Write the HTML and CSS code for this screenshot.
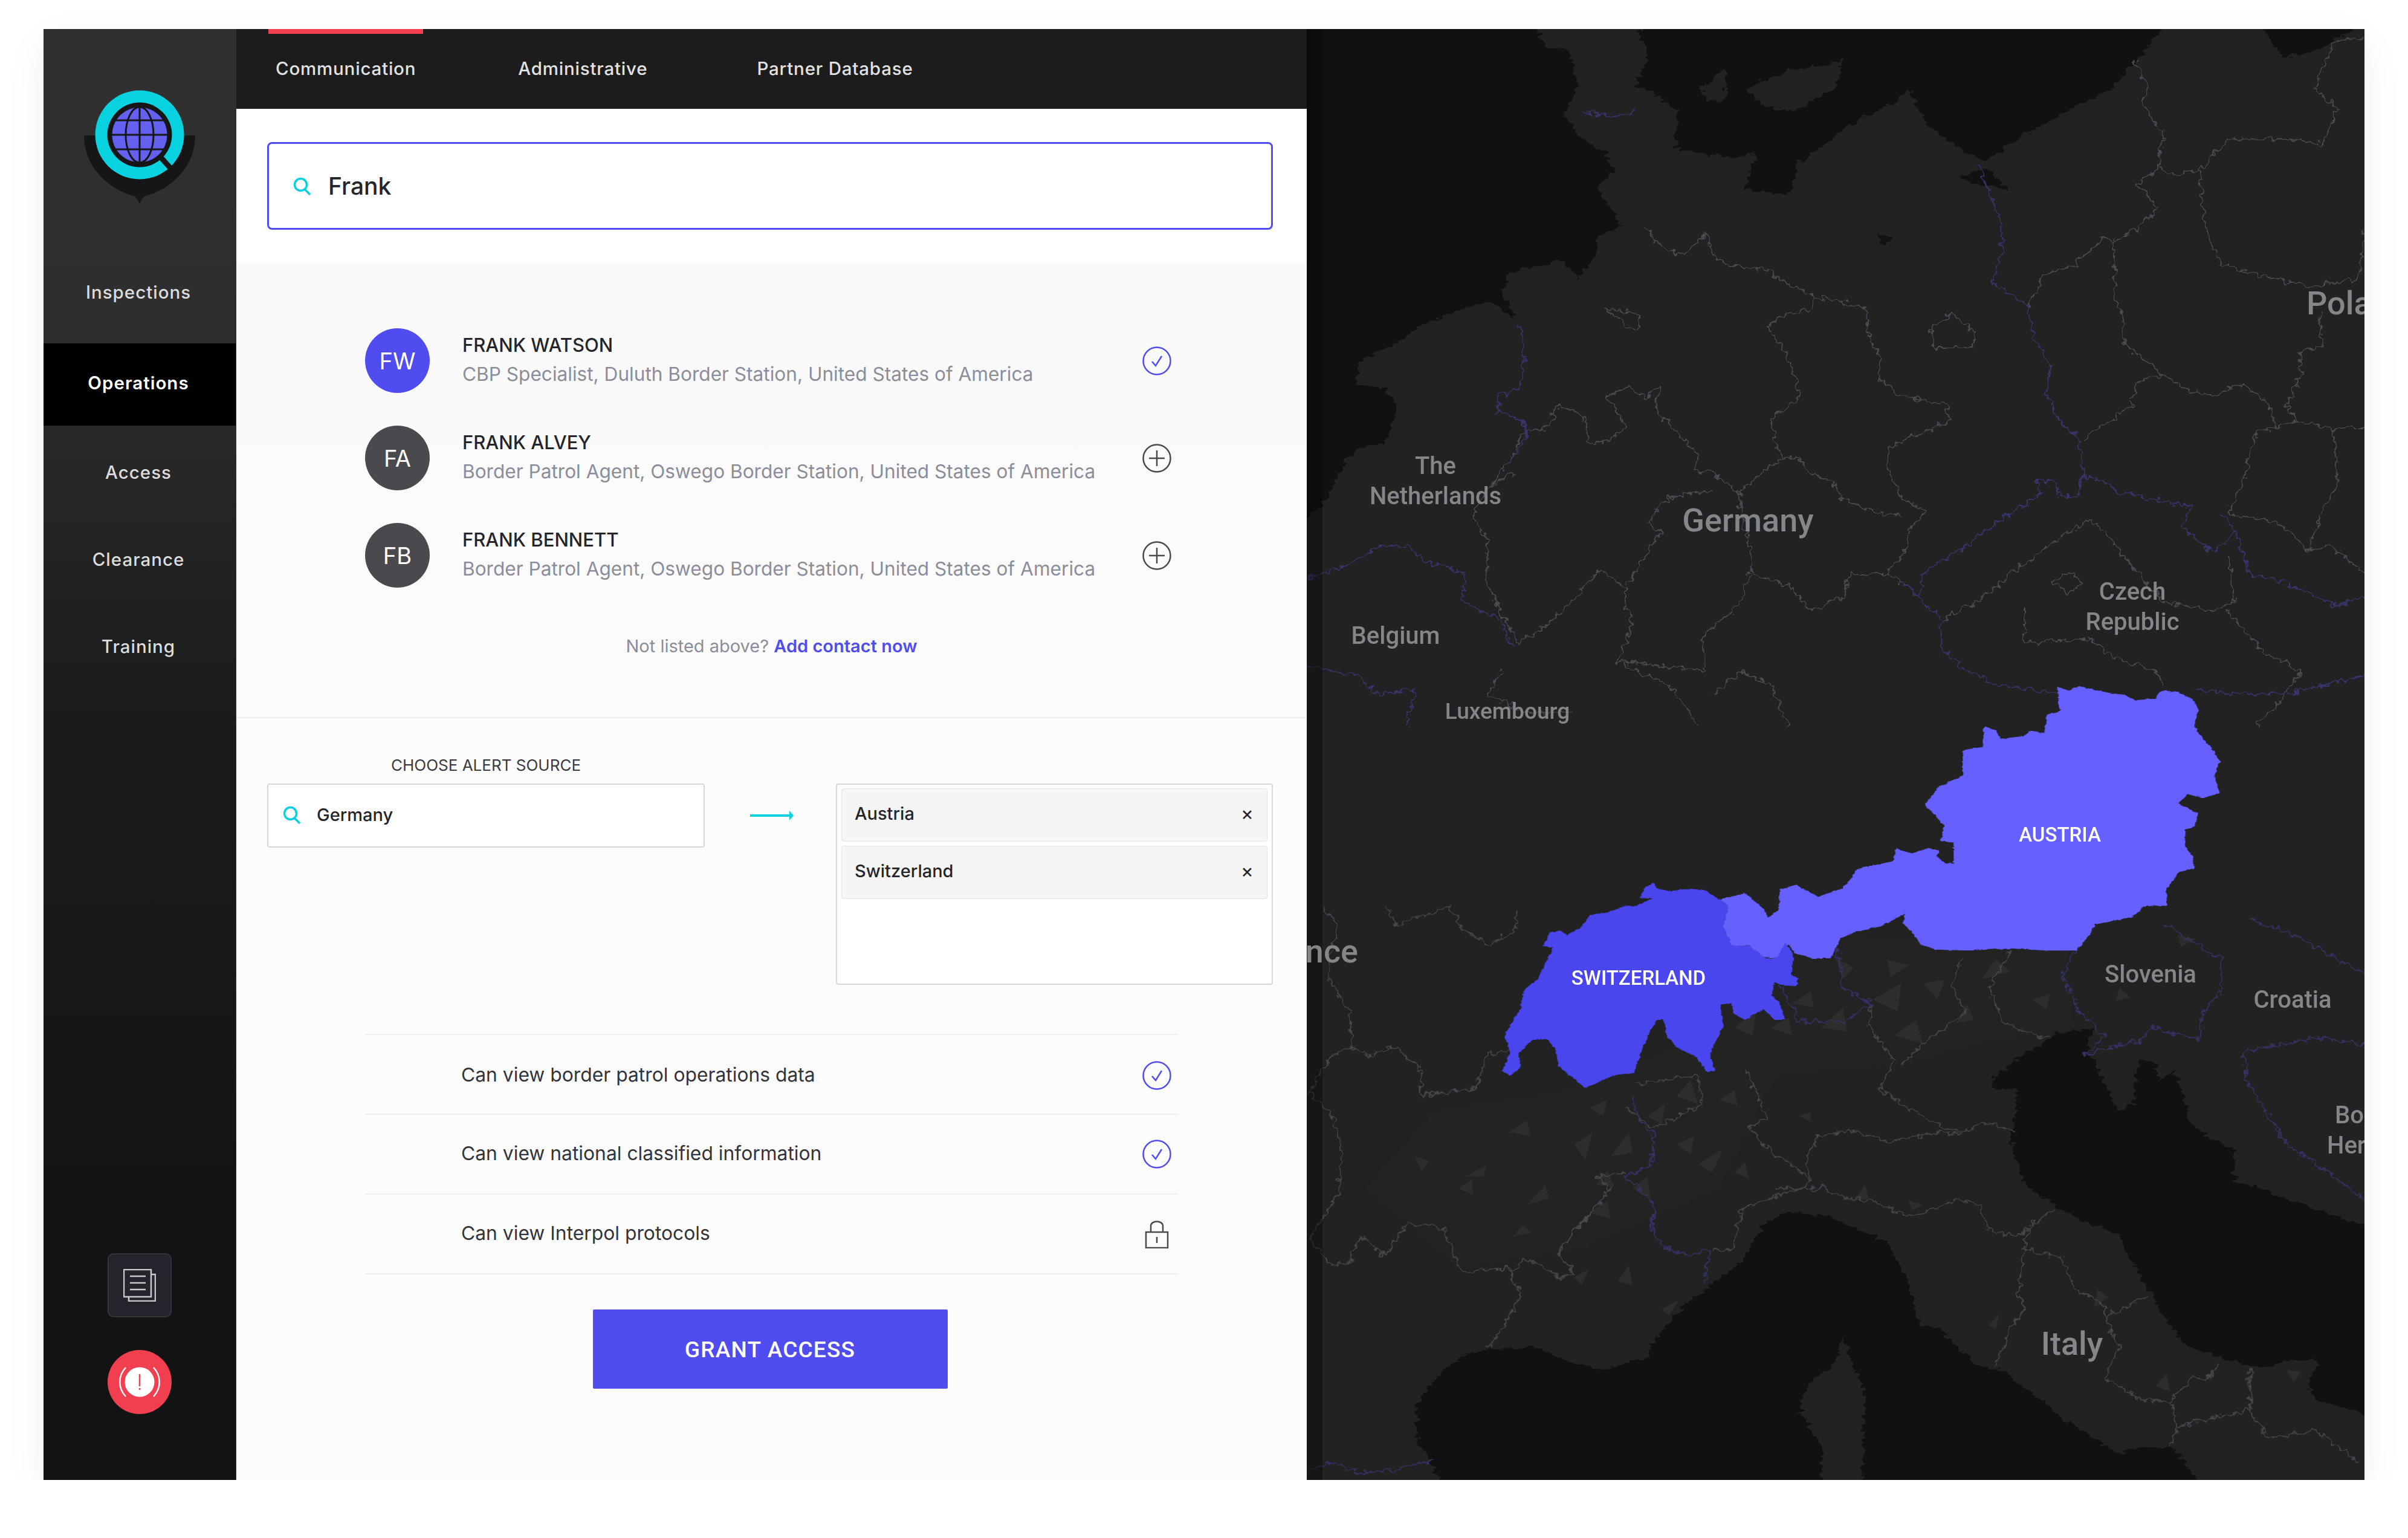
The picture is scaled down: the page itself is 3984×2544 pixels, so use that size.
FILE: index.html
```html
<!DOCTYPE html>
<html lang="en">
<head>
    <meta charset="UTF-8">
    <title>Operations - Communication</title>
    <link rel="stylesheet" href="styles.css">
</head>
<body>
    <svg class="defs" width="0" height="0">
        <defs>
            <symbol id="i-check" viewBox="0 0 48 48">
                <circle cx="24" cy="24" r="22.5" fill="none" stroke="#4f4cf0" stroke-width="2.5"/>
                <path d="M16 25l6 7 10-16" fill="none" stroke="#4f4cf0" stroke-width="2.5"/>
            </symbol>
            <symbol id="i-plus" viewBox="0 0 48 48">
                <circle cx="24" cy="24" r="22.5" fill="none" stroke="#4a4a4e" stroke-width="2.5"/>
                <path d="M24 11v26M11 24h26" fill="none" stroke="#4a4a4e" stroke-width="2.5"/>
            </symbol>
            <symbol id="i-search" viewBox="0 0 30 30">
                <circle cx="12.5" cy="12.5" r="10" fill="none" stroke="#09d2e0" stroke-width="3.5"/>
                <path d="M19 20l9 9" fill="none" stroke="#09d2e0" stroke-width="3.5"/>
            </symbol>
        </defs>
    </svg>

    <div class="frame">
        <aside class="sidebar">
            <svg class="logo" viewBox="0 0 184 190" width="184" height="190">
                <path d="M0 75H184C184 130 140 165 102 175C97 177 94 183 92 188C90 183 87 177 82 175C44 165 0 130 0 75Z" fill="#161616"/>
                <circle cx="92" cy="74" r="73.5" fill="#09d2e0"/>
                <circle cx="92" cy="74" r="53.5" fill="#161616"/>
                <circle cx="92" cy="74" r="45.5" fill="#6461f0"/>
                <g fill="none" stroke="#161616" stroke-width="3">
                    <ellipse cx="92" cy="74" rx="23" ry="46"/>
                    <path d="M92 28v92M46 74h92M52 50h80M52 98h80"/>
                </g>
                <path d="M124 108l27 30" stroke="#161616" stroke-width="9" fill="none"/>
            </svg>

            <nav class="side-nav">
                <a class="side-item">Inspections</a>
                <a class="side-item active">Operations</a>
                <a class="side-item">Access</a>
                <a class="side-item">Clearance</a>
                <a class="side-item">Training</a>
            </nav>

            <div class="side-tools">
                <button class="doc-btn">
                    <svg viewBox="0 0 54 54" width="54" height="54" fill="none" stroke="#c9c9cc" stroke-width="2.5">
                        <rect x="1" y="1" width="45" height="45"/>
                        <path d="M46 9h7v44H9v-7M11 12h26M11 23h26M11 34h26"/>
                    </svg>
                </button>
                <button class="alert-btn">
                    <svg viewBox="0 0 70 52" width="70" height="52">
                        <circle cx="35" cy="26" r="24.5" fill="#fff"/>
                        <path d="M35 13v20M35 36v3" stroke="#f23f4f" stroke-width="2.5" fill="none"/>
                        <path d="M12 2C-1 16-1 36 12 50M58 2C71 16 71 36 58 50" stroke="#fff" stroke-width="2.5" fill="none"/>
                    </svg>
                </button>
            </div>
        </aside>

        <main class="main">
            <div class="tabs">
                <a class="tab active">Communication</a>
                <a class="tab">Administrative</a>
                <a class="tab">Partner Database</a>
            </div>

            <div class="search-wrap">
                <div class="search-box">
                    <svg class="search-icon"><use href="#i-search"/></svg>
                    <span>Frank</span>
                </div>
            </div>

            <section class="contacts">
                <div class="contact">
                    <div class="avatar blue">FW</div>
                    <div class="contact-info">
                        <div class="contact-name">FRANK WATSON</div>
                        <div class="contact-role">CBP Specialist, Duluth Border Station, United States of America</div>
                    </div>
                    <svg class="row-icon"><use href="#i-check"/></svg>
                </div>
                <div class="contact">
                    <div class="avatar">FA</div>
                    <div class="contact-info">
                        <div class="contact-name">FRANK ALVEY</div>
                        <div class="contact-role">Border Patrol Agent, Oswego Border Station, United States of America</div>
                    </div>
                    <svg class="row-icon"><use href="#i-plus"/></svg>
                </div>
                <div class="contact">
                    <div class="avatar">FB</div>
                    <div class="contact-info">
                        <div class="contact-name">FRANK BENNETT</div>
                        <div class="contact-role">Border Patrol Agent, Oswego Border Station, United States of America</div>
                    </div>
                    <svg class="row-icon"><use href="#i-plus"/></svg>
                </div>
                <p class="not-listed">Not listed above? <a>Add contact now</a></p>
            </section>

            <section class="alerts">
                <div class="source-row">
                    <div class="source-col">
                        <div class="source-label">CHOOSE ALERT SOURCE</div>
                        <div class="source-input">
                            <svg class="source-icon"><use href="#i-search"/></svg>
                            <span>Germany</span>
                        </div>
                    </div>
                    <svg class="arrow" viewBox="0 0 72 16" width="72" height="16">
                        <path d="M0 8h68" stroke="#09d2e0" stroke-width="4"/>
                        <path d="M65 0l7 8-7 8z" fill="#09d2e0"/>
                    </svg>
                    <div class="chip-box">
                        <div class="chip">Austria<span class="chip-x">×</span></div>
                        <div class="chip">Switzerland<span class="chip-x">×</span></div>
                    </div>
                </div>

                <ul class="perms">
                    <li class="perm">
                        <span>Can view border patrol operations data</span>
                        <svg class="row-icon"><use href="#i-check"/></svg>
                    </li>
                    <li class="perm">
                        <span>Can view national classified information</span>
                        <svg class="row-icon"><use href="#i-check"/></svg>
                    </li>
                    <li class="perm">
                        <span>Can view Interpol protocols</span>
                        <svg class="row-icon" viewBox="0 0 48 48">
                            <path d="M14 22V11C14 1 34 1 34 11V22" fill="none" stroke="#4a4a4e" stroke-width="2.5"/>
                            <rect x="6" y="21" width="36" height="26" fill="none" stroke="#4a4a4e" stroke-width="2.5"/>
                            <path d="M24 29v10" stroke="#4a4a4e" stroke-width="2.5"/>
                        </svg>
                    </li>
                </ul>

                <button class="grant-btn">GRANT ACCESS</button>
            </section>
        </main>

        <div class="map">
            <svg viewBox="2162 48 1750 2400" preserveAspectRatio="none">
                <defs>
                    <filter id="rough" x="-5%" y="-5%" width="110%" height="110%" color-interpolation-filters="sRGB">
                        <feTurbulence type="fractalNoise" baseFrequency="0.09" numOctaves="2" seed="4"/>
                        <feDisplacementMap in="SourceGraphic" scale="18" xChannelSelector="R" yChannelSelector="G"/>
                    </filter>
                    <filter id="fine" x="-5%" y="-5%" width="110%" height="110%" color-interpolation-filters="sRGB">
                        <feTurbulence type="fractalNoise" baseFrequency="0.09" numOctaves="2" seed="9"/>
                        <feDisplacementMap in="SourceGraphic" scale="7" xChannelSelector="R" yChannelSelector="G"/>
                    </filter>
                </defs>
                <rect class="land" x="2162" y="48" width="1750" height="2400"/>

                <!-- alps, a bit lighter than the rest -->
                <g transform="translate(2100 1500) scale(1.202 .6658)">
                    <path class="alps" filter="url(#rough)" d="M700 50L1100 110 1110 310 1000 330 880 390 700 420 620 700 430 850 260 900 130 700 230 500 400 460 600 320z"/>
                    <path class="facet" d="M900 190l30-10-10 50zM830 230l40-40-5 70zM760 300l30-50 5 60zM960 240l-15 50 25-10zM720 240l25-30 5 40zM1000 130l20 30-40 20zM860 320l30-40 10 60zM640 300l30-40-5 60zM560 470l20-40 10 60zM420 590l25-30-10 70zM470 620l25-60 5 50zM380 690l-25 50 30-15zM500 700l20-30 5 55zM300 640l-30 30 25 0zM590 640l35-40-15 60zM440 760l25-30 5 45zM350 790l-15 30 25-10zM480 930l15-40 5 50zM820 690l-15 40 20-5zM990 1040l15-30-5 40zM880 730l20 10-15 15zM540 1000l25-25-15 40zM420 920l20-20-10 40zM1140 950l15 20-20 25zM1220 1190l15-30 5 45zM1400 1150l20 5-10 25zM780 130l25 20-15 30zM850 130l30 15-25 30zM1050 230l25-15-5 40zM1170 200l15 25-20 10zM1250 70l25 10-20 20zM690 300l25-25 5 45zM620 480l20-25 5 40zM520 520l25-30-5 50zM440 500l25-20-5 40zM330 560l25-30 5 40zM260 700l20-25 0 40zM200 620l20 10-10 30zM450 690l15-35 10 40zM560 590l25-20-5 45zM640 660l15-25 5 40zM730 520l15-10 0 25z"/>
                </g>

                <g filter="url(#rough)" transform="translate(2100 0) scale(1.202 .7653)">
                    <path class="sea" d="M40 40H360L380 100 415 110 425 190 405 250 430 300 462 330 475 370 450 400 485 490 450 510 450 550 425 600 400 562 330 590 320 640 340 690 300 650 210 700 180 740 125 780 118 830 160 840 175 880 160 960 115 970 105 1000 75 1090 40 1130Z"/>
                    <path class="sea" d="M510 40H1240L1195 130 1160 190 1100 240 1040 290 985 350 950 320 905 270 880 190 860 220 800 270 730 350 715 420 655 410 670 330 640 340 590 330 560 320 560 240 520 190 505 190 520 130 510 75Z"/>
                    <path class="sea" d="M1360 40L1395 125 1440 110 1520 40Z"/>
                    <path class="sea" d="M950 380L990 365 1015 410 965 395zM840 505l15 10-5 15-10-10z"/>
                    <path class="land" d="M655 190L720 150 770 140 790 125 780 190 720 240 680 230zM595 190l30-40 5 70-25 0z"/>
                </g>

                <!-- adriatic and tyrrhenian -->
                <g filter="url(#rough)" transform="translate(2100 1500) scale(1.202 .6658)">
                    <path class="sea" d="M1090 310L1135 305 1125 340 1150 440 1170 510 1190 490 1195 380 1220 385 1225 430 1245 405 1260 470 1265 530 1290 570 1325 600 1330 680 1380 710 1430 745 1520 800V1265L1440 1225 1430 1190 1445 1125 1400 1130 1370 1145 1320 1125 1260 1090 1225 1000 1190 890 1165 810 1130 790 1085 745 1040 690 1020 580 1030 450 1000 455 995 430 1030 375Z"/>
                    <path class="sea" d="M715 757L740 760 770 770 820 810 850 830 880 930 895 1040 920 1045 975 1140 1010 1150 1050 1210 1100 1280 1170 1360 1200 1340 1245 1345 1285 1440H815L820 1200 800 1120 790 1065 780 1130 740 1190 730 1250 760 1340 760 1440H240L205 1330 200 1240 240 1150 270 1110 300 1100 370 1095 420 1135 460 1150 520 1120 530 1075 560 1010 600 950 650 880 680 790Z"/>
                </g>

                <g class="borders" filter="url(#rough)">
                    <g transform="translate(2100 0) scale(1.202 .7653)">
                        <polyline points="515,490 545,540 570,550 600,505 610,550 630,575 680,580 715,615 750,640 810,660 822,670 825,740 840,760 840,820 870,855 930,875 938,910 905,930 855,965 850,1010 870,1075 905,1105 880,1145 880,1180 850,1240"/>
                        <polyline points="750,640 745,670 705,682 685,705 710,760 725,820 730,860 690,910 700,970 710,990 730,990 745,1025 775,1040 790,1080 830,1105 870,1115"/>
                        <polyline points="710,990 680,1020 645,1065 610,1020 585,1020 590,980 555,925 530,880 540,830 520,860 495,835 465,855 490,920 470,950 440,960 435,900 400,875 380,925 350,935 330,1000 305,1050 340,1020"/>
                        <polyline points="645,1065 660,1180 665,1240 720,1270 745,1320 790,1290 800,1240 850,1240 880,1270"/>
                        <polyline points="610,1060 550,1075 520,1130 540,1150 510,1220 490,1270 455,1230 415,1300 375,1360 340,1390 300,1260 300,1170 280,1110 305,1050"/>
                        <polyline points="660,1240 650,1300 595,1380 600,1450 545,1440 480,1430 500,1350 490,1300 490,1270"/>
                        <polyline points="1190,130 1210,190 1200,220 1230,290 1225,360 1245,380 1280,370 1320,300 1400,300 1450,310 1470,235 1440,190 1465,90 1508,80"/>
                        <polyline points="1280,370 1285,440 1290,500 1310,570 1380,600 1430,620 1470,610 1500,600 1508,500"/>
                        <polyline points="1225,360 1195,400 1225,450 1190,500 1160,525 1150,510 1105,575 1065,595 1045,660"/>
                        <polyline points="1160,510 1165,600 1160,630 1175,680 1175,740 1230,810 1260,840 1300,855 1340,830 1375,870 1385,925 1415,910 1465,925 1508,925"/>
                        <polyline points="1230,810 1195,825 1185,880 1120,950"/>
                        <polyline points="1415,910 1400,880 1420,810 1420,760 1450,745 1445,680"/>
                        <polyline points="1385,925 1360,930 1340,1040 1320,1110 1390,1130 1430,1190 1460,1180 1508,1240"/>
                        <polyline points="1465,925 1470,1050 1450,1100 1430,1190"/>
                        <polyline points="925,1340 975,1300 1020,1240 1090,1160 1130,1125 1150,1150 1185,1220 1230,1300 1300,1320 1330,1300 1320,1200"/>
                        <polyline points="1040,1310 1040,1390 1090,1385 1130,1380 1160,1420 1220,1450 1230,1480"/>
                        <polyline points="1320,1320 1370,1410 1420,1450 1400,1500 1360,1568"/>
                        <polyline points="480,1430 520,1460 550,1480 590,1568"/>
                        <polyline points="610,1500 650,1450 690,1480 715,1568"/>
                        <polyline points="320,1450 300,1500 350,1540 420,1540"/>
                        <polygon points="1100,1235 1120,1260 1100,1285 1078,1260"/>
                        <polygon points="940,675 970,720 970,750 915,750 910,710"/>
                        <polygon points="462,665 510,680 510,710 490,705"/>
                    </g>
                    <g transform="translate(2100 1500) scale(1.202 .6658)">
                        <polyline points="75,0 95,50 85,100 80,170 110,260 115,350"/>
                        <polyline points="160,0 175,45 250,0 265,50 300,95 340,60 340,10"/>
                        <polyline points="115,350 85,370 55,460 90,530 100,610 95,710 55,825"/>
                        <polyline points="115,350 135,370 170,345 210,405 208,470 285,450 300,365 330,360"/>
                        <polyline points="505,440 590,420 595,490 530,550 490,500"/>
                        <polyline points="655,400 685,520 660,550 690,610 720,640 745,680 735,700 690,720 650,750 640,850 610,855"/>
                        <polyline points="745,680 740,620 755,570 800,555 850,585 920,560 950,565 985,535 1030,560"/>
                        <polyline points="700,700 765,700 790,720 830,730 880,770 950,725 980,745 990,800 1030,820 1050,790 1080,750"/>
                        <polyline points="1035,850 1090,870 1110,950 1150,990 1150,1020 1210,965"/>
                        <polyline points="1045,800 1030,960 1040,1000 1020,1050 1000,1140"/>
                        <polyline points="1150,1020 1170,1090 1150,1170 1200,1225 1240,1230 1270,1170 1290,1175 1310,1130"/>
                        <polyline points="1240,1230 1250,1290 1240,1340"/>
                        <polyline points="1250,1290 1350,1250 1375,1320 1440,1300 1500,1380"/>
                        <polyline points="1350,1250 1350,1145"/>
                        <polyline points="440,760 410,830 395,860 420,910 400,920 350,870 340,900 300,900 265,910 240,800 190,785 160,870 125,815 110,885 85,890 55,825"/>
                        <polyline points="410,830 470,700 450,670 490,660"/>
                        <polyline points="330,900 345,965 320,1050 300,1100"/>
                        <polyline points="830,240 825,300 860,380 840,450 870,490 930,550 950,560"/>
                        <polyline points="955,120 940,200 960,260 900,340 870,390"/>
                        <polyline points="1020,110 990,200 1010,290 1075,330"/>
                    </g>
                </g>
                <g class="borders-in" filter="url(#rough)">
                    <g transform="translate(2100 0) scale(1.202 .7653)">
                        <polyline points="345,700 350,780 345,840 315,855 315,890 350,910 355,940 330,1000"/>
                        <polyline points="430,243 490,250 505,240"/>
                        <polyline points="975,350 1005,470 1010,540 995,610 1045,660 1050,720 1075,790 1070,850 1085,905 1115,950 1120,1020 1110,1075"/>
                        <polyline points="1110,1075 1085,1070 1085,1040 1055,1040 1060,1070 1000,1130 950,1190 900,1240 895,1290 870,1260"/>
                        <polyline points="880,1270 925,1340 925,1400 950,1440 1000,1480 1085,1500"/>
                        <polyline points="1110,1075 1120,1030 1150,1040 1170,1065 1240,1085 1270,1095 1255,1140 1300,1195 1330,1150 1310,1110"/>
                        <polyline points="1330,1150 1350,1240 1400,1260 1470,1310 1508,1290"/>
                        <polyline points="52,1250 110,1220 150,1180 190,1180 210,1210 270,1240 265,1300 320,1340 335,1400"/>
                        <polyline points="50,1440 120,1460 150,1500 200,1490 190,1568"/>
                        <polyline points="1275,1490 1330,1500 1400,1500 1508,1460"/>
                    </g>
                    <g transform="translate(2100 1500) scale(1.202 .6658)">
                        <polyline points="500,470 510,530 530,570 525,640 490,670 510,700 530,740 525,800 545,850 580,865 605,850 600,935"/>
                        <polyline points="780,80 790,200 830,240 790,285 730,285 720,250 700,190"/>
                        <polyline points="1110,110 1090,170 1115,260 1150,320 1120,370 1200,330 1215,300 1280,330 1285,260 1310,210 1310,130 1230,40"/>
                        <polyline points="1350,30 1410,70 1470,130 1508,165"/>
                        <polyline points="1340,360 1345,430 1400,590 1450,650 1508,730"/>
                        <polyline points="1340,360 1400,340 1440,325 1508,340"/>
                        <polyline points="55,1400 90,1380 120,1405 170,1400 225,1375"/>
                    </g>
                </g>

                <g filter="url(#fine)" transform="translate(2400 1080) scale(.8929 .5102)">
                    <path class="austria" d="M1124 110L1145 122 1165 108 1190 118 1220 130 1245 135 1270 153 1305 148 1315 122 1345 125 1375 150 1385 185 1378 240 1395 280 1415 320 1425 352 1415 400 1425 455 1395 470 1365 458 1348 488 1385 520 1380 560 1362 575 1360 620 1375 660 1378 700 1350 710 1325 770 1328 818 1285 822 1265 855 1195 880 1175 935 1160 965 1100 965 1040 958 960 965 900 962 870 945 855 905 838 875 842 845 800 885 750 905 722 925 705 990 670 990 640 975 625 945 605 990 575 985 555 950 520 948 505 885 515 820 500 800 545 778 580 830 588 858 608 830 610 765 640 752 680 790 725 765 755 700 820 675 825 635 855 650 885 632 905 640 900 660 920 685 932 680 932 615 908 610 915 560 878 490 905 435 950 395 950 315 985 305 988 238 1010 250 1020 278 1060 270 1075 252 1100 260 1105 200 1128 188Z"/>
                    <path class="swiss" d="M375 745L385 765 405 772 440 765 470 768 500 800 515 820 505 885 520 948 555 950 585 990 605 990 620 940 635 975 632 1045 645 1055 640 1080 615 1078 600 1068 595 1110 610 1135 620 1190 600 1190 580 1155 545 1190 525 1170 520 1135 500 1140 505 1210 480 1300 490 1355 475 1360 455 1310 420 1280 400 1240 395 1185 380 1195 360 1260 340 1360 300 1370 250 1412 225 1375 200 1340 195 1290 180 1252 150 1255 125 1300 130 1345 110 1372 95 1355 110 1300 100 1240 130 1150 135 1095 160 1060 190 955 172 950 185 905 205 900 215 915 240 890 260 848 290 842 325 820 345 820 375 795 350 795 358 765Z"/>
                </g>

                <rect class="map-edge" x="2162" y="48" width="26" height="2400"/>

                <text class="lbl" x="2375" y="784">The</text>
                <text class="lbl" x="2375" y="834">Netherlands</text>
                <text class="lbl big" x="2892" y="879">Germany</text>
                <text class="lbl" x="2309" y="1065">Belgium</text>
                <text class="lbl small" x="2494" y="1189">Luxembourg</text>
                <text class="lbl" x="3528" y="992">Czech</text>
                <text class="lbl" x="3528" y="1042">Republic</text>
                <text class="lbl big start" x="3816" y="520">Poland</text>
                <text class="lbl big end" x="2247" y="1592">France</text>
                <text class="lbl" x="3558" y="1625">Slovenia</text>
                <text class="lbl" x="3793" y="1667">Croatia</text>
                <text class="lbl start" x="3863" y="1858">Bosnia</text>
                <text class="lbl start" x="3850" y="1908">Herzegovina</text>
                <text class="lbl big" x="3428" y="2241">Italy</text>
                <text class="lbl country" x="3408" y="1392">AUSTRIA</text>
                <text class="lbl country" x="2711" y="1629">SWITZERLAND</text>
            </svg>
        </div>
    </div>
</body>
</html>
```

FILE: styles.css
```css
* {
    margin: 0;
    padding: 0;
    box-sizing: border-box;
}

body {
    background-color: #ffffff;
    font-family: Inter, "Noto Sans", sans-serif;
    color: #24252b;
}

.defs {
    position: absolute;
}

.frame {
    display: flex;
    width: 3840px;
    height: 2400px;
    margin: 48px 0 0 72px;
    box-shadow: 0 24px 70px rgba(0, 0, 0, 0.05), 0 0 40px rgba(0, 0, 0, 0.02);
}

/* Sidebar */
.sidebar {
    display: flex;
    flex-direction: column;
    align-items: center;
    flex: 0 0 319px;
    padding-top: 101px;
    background: linear-gradient(#303030 0, #2e2e2e 500px, #1c1c1c 1100px, #131313 2000px);
    border-right: 1px solid #333;
}

.logo {
    display: block;
    flex: none;
}

.side-nav {
    display: flex;
    flex-direction: column;
    gap: 8px;
    align-self: stretch;
    margin-top: 77px;
}

.side-item {
    display: flex;
    align-items: center;
    justify-content: center;
    height: 136px;
    padding: 0 4px 2px 0;
    font-size: 29.5px;
    font-weight: 500;
    letter-spacing: 1px;
    color: #dcdcdc;
}

.side-item.active {
    margin-top: 8px;
    margin-bottom: 2px;
    padding-bottom: 6px;
    background-color: #000;
    color: #fff;
    font-weight: 600;
}

.side-tools {
    display: flex;
    flex-direction: column;
    gap: 54px;
    margin-top: auto;
    padding-bottom: 109px;
}

.doc-btn,
.alert-btn {
    display: flex;
    align-items: center;
    justify-content: center;
    width: 106px;
    height: 106px;
    border: none;
}

.doc-btn {
    background-color: #24242c;
    border: 2px solid #35353d;
    border-radius: 10px;
}

.alert-btn {
    background-color: #f23f4f;
    border-radius: 50%;
}

/* Main column */
.main {
    flex: 0 0 1771px;
    display: flex;
    flex-direction: column;
    background-color: #fff;
}

.tabs {
    display: flex;
    gap: 145px;
    height: 132px;
    padding-left: 53px;
    background-color: #1c1c1c;
}

.tab {
    display: flex;
    align-items: center;
    padding: 0 12px 10px;
    border-top: 8px solid transparent;
    font-size: 29.5px;
    font-weight: 500;
    letter-spacing: 0.8px;
    color: #e2e2e2;
}

.tab:last-child {
    margin-left: 12px;
}

.tab.active {
    border-top-color: #f23f4f;
}

.search-wrap {
    height: 255px;
    padding: 55px 56px 0 51px;
}

.search-box {
    display: flex;
    align-items: center;
    gap: 28px;
    height: 145px;
    padding-left: 40px;
    border: 3px solid #4f4cf0;
    border-radius: 8px;
    font-size: 39px;
    font-weight: 500;
}

.search-icon,
.source-icon {
    width: 30px;
    height: 30px;
}

.contacts {
    height: 753px;
    padding: 108px 0 0 213px;
    border-bottom: 2px solid #efeff1;
    background: linear-gradient(#f9f9f9, #fcfcfc);
}

.contact {
    display: flex;
    align-items: center;
    height: 107px;
    margin-bottom: 54px;
}

.avatar {
    display: flex;
    align-items: center;
    justify-content: center;
    flex: none;
    width: 107px;
    height: 107px;
    margin-right: 54px;
    border-radius: 50%;
    background-color: #4a4a4e;
    color: #fff;
    font-size: 38px;
}

.avatar.blue {
    background-color: #4f4cf0;
}

.contact-info {
    width: 1125px;
    padding-bottom: 4px;
}

.contact-name {
    font-size: 31px;
    font-weight: 500;
    line-height: 48px;
}

.contact-role {
    font-size: 31.6px;
    line-height: 48px;
    color: #8b8d9b;
}

.row-icon {
    flex: none;
    width: 48px;
    height: 48px;
}

.not-listed {
    margin: 77px 213px 0 0;
    text-align: center;
    font-size: 29px;
    line-height: 40px;
    color: #8b8d9b;
}

.not-listed a {
    color: #4f4cf0;
    font-weight: 600;
}

.alerts {
    flex: 1;
    padding: 60px 56px 0 51px;
    background-color: #fcfcfc;
}

.source-row {
    display: flex;
    align-items: flex-start;
}

.source-col {
    flex: 0 0 724px;
}

.source-label {
    height: 48px;
    text-align: center;
    font-size: 26px;
    line-height: 36px;
    color: #3a3a40;
}

.source-input {
    display: flex;
    align-items: center;
    gap: 26px;
    height: 106px;
    padding: 0 0 3px 24px;
    border: 2px solid #d6d6dc;
    border-radius: 4px;
    background-color: #fff;
    font-size: 29px;
    font-weight: 500;
}

.arrow {
    margin: 93px 70px 0 75px;
}

.chip-box {
    flex: 1;
    height: 333px;
    margin-top: 48px;
    padding: 6px 7px;
    border: 2px solid #d6d6dc;
    border-radius: 4px;
    background-color: #fff;
}

.chip {
    display: flex;
    align-items: center;
    justify-content: space-between;
    height: 88px;
    margin-bottom: 7px;
    padding: 0 22px 5px 21px;
    border: 1px solid #e4e4e8;
    border-radius: 4px;
    background-color: #f5f5f6;
    font-size: 29px;
    font-weight: 500;
}

.chip-x {
    font-size: 32px;
    font-weight: 400;
}

.perms {
    list-style: none;
    width: 1345px;
    margin: 81px 0 0 162px;
    border-top: 2px solid #f0f0f2;
}

.perm {
    display: flex;
    align-items: center;
    justify-content: space-between;
    height: 132px;
    padding: 0 11px 0 159px;
    border-bottom: 2px solid #f0f0f2;
    font-size: 31.8px;
    color: #33343a;
}

.perm:first-child {
    padding-top: 4px;
}

.perm span {
    padding-bottom: 4px;
}

.grant-btn {
    display: block;
    width: 587px;
    height: 131px;
    margin: 58px auto 0;
    padding-top: 2px;
    border: none;
    border-radius: 2px;
    background-color: #4f4cf0;
    color: #fff;
    font-family: Roboto, sans-serif;
    font-size: 37px;
    font-weight: 500;
    letter-spacing: 1.2px;
}

/* Map */
.map {
    flex: 1;
    background-color: #222223;
    overflow: hidden;
}

.map svg {
    display: block;
    width: 100%;
    height: 100%;
}

.land {
    fill: #222223;
}

.sea {
    fill: #111112;
}

.alps {
    fill: #232324;
}

.facet {
    fill: #2d2d2e;
}

.austria {
    fill: #6560ff;
}

.swiss {
    fill: #4a46ee;
}

.map-edge {
    fill: #000;
    opacity: 0.35;
}

.borders polyline,
.borders polygon,
.borders-in polyline {
    fill: none;
    vector-effect: non-scaling-stroke;
}

.borders polyline,
.borders polygon {
    stroke: #4c4c52;
    stroke-width: 2;
}

.borders-in polyline {
    stroke: #37356b;
    stroke-width: 2.2;
}

.lbl {
    fill: #85868a;
    font-family: Roboto, sans-serif;
    font-size: 40px;
    font-weight: 500;
    text-anchor: middle;
}

.lbl.big {
    font-size: 54px;
}

.lbl.small {
    font-size: 37px;
}

.lbl.start {
    text-anchor: start;
}

.lbl.end {
    text-anchor: end;
}

.lbl.country {
    fill: #fff;
    font-size: 33px;
    font-weight: 500;
}
```
